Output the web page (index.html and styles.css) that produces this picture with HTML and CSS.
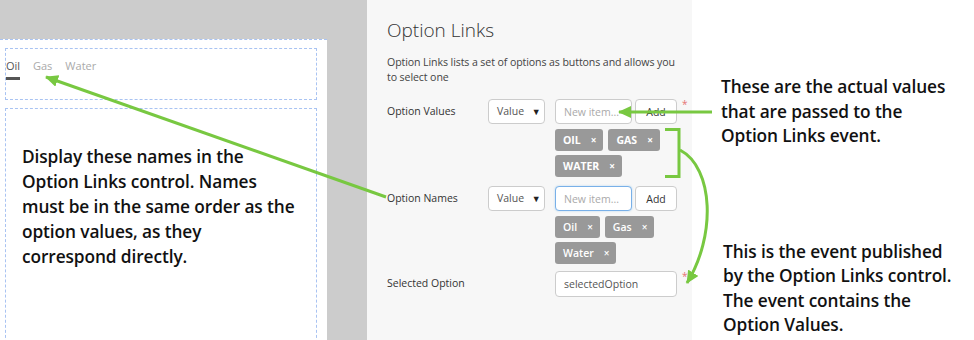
FILE: index.html
```html
<!DOCTYPE html>
<html lang="en">
<head>
    <meta charset="UTF-8">
    <title>Option Links</title>
    <link rel="stylesheet" href="styles.css">
</head>
<body>
    <div class="page">
        <div class="designer">
            <div class="canvas">
                <div class="zone zone-top">
                    <div class="option-links">
                        <a class="active" href="#">Oil</a>
                        <a href="#">Gas</a>
                        <a href="#">Water</a>
                    </div>
                </div>
                <div class="zone zone-main">
                    <p class="note note-left">Display these names in the<br>Option Links control. Names<br>must be in the same order as the<br>option values, as they<br>correspond directly.</p>
                </div>
            </div>
        </div>

        <section class="panel">
            <h1>Option Links</h1>
            <p class="desc">Option Links lists a set of options as buttons and allows you<br>to select one</p>

            <div class="field">
                <label>Option Values</label>
                <div class="select">Value <span class="caret">&#9660;</span></div>
                <div class="control">
                    <div class="adder">
                        <input type="text" placeholder="New item...">
                        <button>Add</button>
                        <span class="req">*</span>
                    </div>
                    <div class="tags">
                        <span class="tag upper">OIL <i>&times;</i></span>
                        <span class="tag upper">GAS <i>&times;</i></span>
                        <span class="tag upper">WATER <i>&times;</i></span>
                    </div>
                </div>
            </div>

            <div class="field field-names">
                <label>Option Names</label>
                <div class="select">Value <span class="caret">&#9660;</span></div>
                <div class="control">
                    <div class="adder">
                        <input class="focused" type="text" placeholder="New item...">
                        <button>Add</button>
                    </div>
                    <div class="tags">
                        <span class="tag">Oil <i>&times;</i></span>
                        <span class="tag">Gas <i>&times;</i></span>
                        <span class="tag">Water <i>&times;</i></span>
                    </div>
                </div>
            </div>

            <div class="field">
                <label>Selected Option</label>
                <div class="spacer"></div>
                <div class="control">
                    <div class="adder">
                        <input class="wide" type="text" value="selectedOption">
                        <span class="req">*</span>
                    </div>
                </div>
            </div>
        </section>

        <aside class="notes">
            <p class="note note-values">These are the actual values<br>that are passed to the<br>Option Links event.</p>
            <p class="note note-event">This is the event published<br>by the Option Links control.<br>The event contains the<br>Option Values.</p>
        </aside>

        <svg class="arrows" width="974" height="340" viewBox="0 0 974 340">
            <defs>
                <marker id="head" markerUnits="userSpaceOnUse" markerWidth="14" markerHeight="12" refX="12" refY="6" orient="auto">
                    <path d="M0,0 L13,6 L0,12 Z" fill="#78c841"/>
                </marker>
            </defs>
            <g fill="none" stroke="#78c841" stroke-width="3">
                <line x1="386" y1="197" x2="46" y2="77" marker-end="url(#head)"/>
                <line x1="712" y1="112" x2="619" y2="112" marker-end="url(#head)"/>
                <polyline points="665,129.5 679,129.5 679,176.5 665,176.5"/>
                <path d="M680 150 C714 168, 716 236, 687 283" marker-end="url(#head)"/>
            </g>
        </svg>
    </div>
</body>
</html>
```

FILE: styles.css
```css
body {
    margin: 0;
    font-family: "Open Sans", "Noto Sans", sans-serif;
    color: #333;
    background: #fff;
}
.page {
    position: relative;
    display: flex;
    width: 974px;
    height: 340px;
    overflow: hidden;
}
.designer {
    width: 367px;
    flex-shrink: 0;
    background: #cccccc;
    padding-top: 39px;
    box-sizing: border-box;
}
.canvas {
    width: 327px;
    height: 301px;
    background: #fff;
    border-top: 1px dashed #a9c3f2;
    box-sizing: border-box;
    padding: 8px 10px 0 5px;
}
.zone {
    border: 1px dashed #a9c3f2;
    box-sizing: border-box;
}
.zone-top {
    height: 52px;
    margin-bottom: 8px;
}
.zone-main {
    height: 240px;
    border-bottom: none;
}
.option-links {
    display: flex;
    gap: 13px;
    padding: 9px 0 0 0;
}
.option-links a {
    font-size: 11px;
    color: #aaa;
    text-decoration: none;
    line-height: 16px;
    padding-bottom: 3px;
}
.option-links a.active {
    color: #555;
    border-bottom: 3px solid #555;
    width: 14px;
}
.note {
    margin: 0;
    font-size: 17.3px;
    font-weight: 600;
    color: #111;
    line-height: 24.5px;
    white-space: nowrap;
    letter-spacing: -0.1px;
}
.note-left {
    padding: 35px 0 0 16px;
    line-height: 25px;
}

.panel {
    width: 325px;
    flex-shrink: 0;
    background: #f7f7f7;
    padding: 16px 0 0 20px;
    box-sizing: border-box;
}
.panel h1 {
    margin: 0;
    font-size: 19px;
    font-weight: 300;
    color: #333;
    line-height: 28px;
}
.desc {
    margin: 11px 0 14px;
    font-size: 10.6px;
    line-height: 15px;
    color: #444;
    letter-spacing: -0.1px;
    white-space: nowrap;
}
.field {
    display: flex;
    align-items: flex-start;
    margin-bottom: 9px;
}
.field-names {
    margin-bottom: 7px;
}
.field label {
    width: 101px;
    flex-shrink: 0;
    font-size: 10.5px;
    line-height: 25px;
    color: #333;
}
.select {
    width: 57px;
    flex-shrink: 0;
    height: 25px;
    box-sizing: border-box;
    border: 1px solid #ccc;
    border-radius: 4px;
    background: #fff;
    font-size: 10.5px;
    line-height: 23px;
    padding-left: 8px;
    color: #555;
    margin-right: 10px;
}
.caret {
    font-size: 9px;
    color: #222;
    margin-left: 5px;
}
.spacer {
    width: 67px;
    flex-shrink: 0;
}
.control {
    width: 135px;
}
.adder {
    display: flex;
    align-items: flex-start;
    gap: 3px;
}
.adder input {
    width: 77px;
    height: 25px;
    box-sizing: border-box;
    border: 1px solid #ccc;
    border-radius: 4px;
    padding: 0 8px;
    font-family: inherit;
    font-size: 10.5px;
    color: #555;
    background: #fff;
    outline: none;
}
.adder input::placeholder {
    color: #aaa;
}
.adder input.focused {
    border-color: #79b0e8;
    box-shadow: 0 0 2px rgba(102, 175, 233, 0.5);
}
.adder input.wide {
    width: 122px;
    height: 26px;
}
.adder button {
    width: 42px;
    height: 25px;
    box-sizing: border-box;
    border: 1px solid #ccc;
    border-radius: 4px;
    background: #fff;
    font-family: inherit;
    font-size: 10.5px;
    color: #333;
    padding: 0;
}
.req {
    color: #e57373;
    font-size: 10px;
    line-height: 10px;
    margin-left: 2px;
}
.tags {
    display: flex;
    flex-wrap: wrap;
    gap: 4px 5px;
    width: 122px;
    margin-top: 5px;
}
.tag {
    display: inline-flex;
    align-items: center;
    height: 22px;
    background: #999;
    border-radius: 3px;
    color: #fff;
    font-size: 10.5px;
    font-weight: 600;
    padding: 0 7px 0 8px;
}
.tag.upper {
    font-weight: 700;
}
.tag i {
    font-style: normal;
    font-size: 10px;
    margin-left: 10px;
}

.notes {
    flex: 1;
    padding: 75px 0 0 29px;
}
.note-values {
    margin-bottom: 91px;
}
.note-event {
    padding-left: 2px;
}
.arrows {
    position: absolute;
    left: 0;
    top: 0;
    pointer-events: none;
}
```
